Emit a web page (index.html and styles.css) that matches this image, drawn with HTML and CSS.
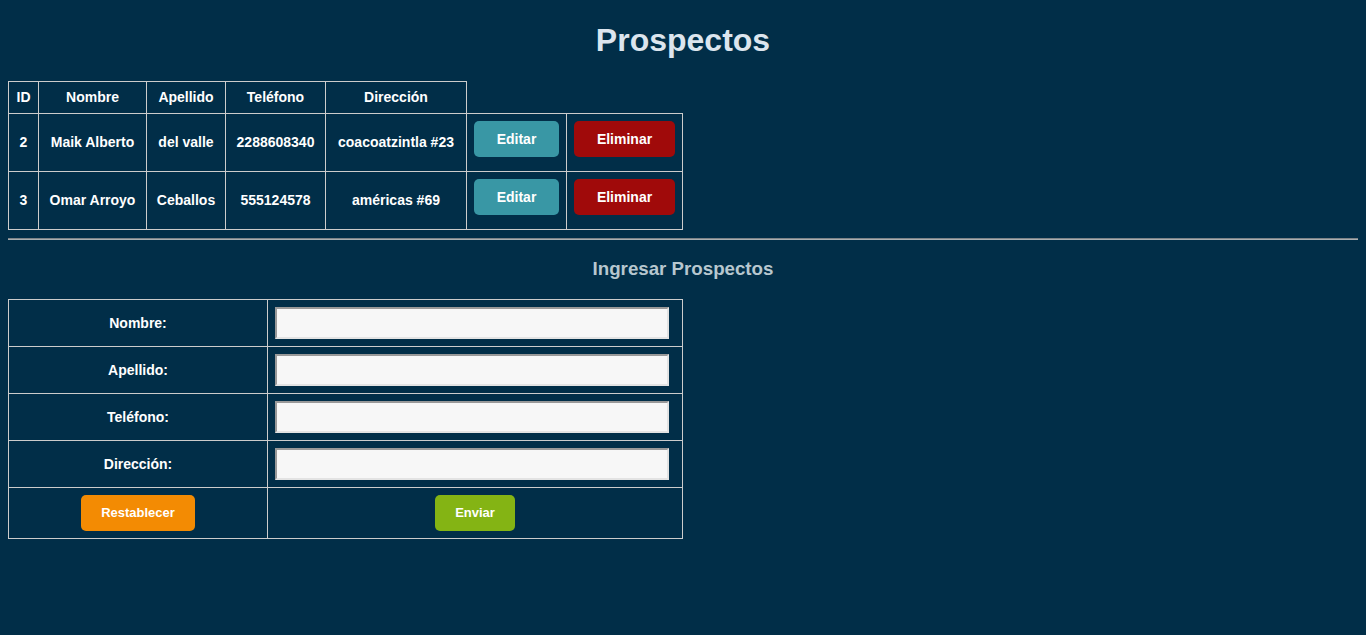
FILE: index.html
```html
<!DOCTYPE html>
<html lang="es">
<head>
<meta charset="utf-8">
<title>Prospectos</title>
<link rel="stylesheet" href="styles.css">
</head>
<body>
<h1 class="title">Prospectos</h1>
<table class="list">
  <colgroup>
    <col class="c-id"><col class="c-nom"><col class="c-ape"><col class="c-tel"><col class="c-dir"><col class="c-ed"><col class="c-el">
  </colgroup>
  <thead>
    <tr><th>ID</th><th>Nombre</th><th>Apellido</th><th>Teléfono</th><th>Dirección</th></tr>
  </thead>
  <tbody>
    <tr>
      <td>2</td><td>Maik Alberto</td><td>del valle</td><td>2288608340</td><td>coacoatzintla #23</td>
      <td class="act"><button class="btn btn-edit">Editar</button></td>
      <td class="act"><button class="btn btn-del">Eliminar</button></td>
    </tr>
    <tr>
      <td>3</td><td>Omar Arroyo</td><td>Ceballos</td><td>555124578</td><td>américas #69</td>
      <td class="act"><button class="btn btn-edit">Editar</button></td>
      <td class="act"><button class="btn btn-del">Eliminar</button></td>
    </tr>
  </tbody>
</table>
<hr class="sep">
<h3 class="subtitle">Ingresar Prospectos</h3>
<form class="form">
<table class="ftable">
  <colgroup><col class="f-lab"><col class="f-in"></colgroup>
  <tr><td class="lab">Nombre:</td><td><input class="inp" type="text"></td></tr>
  <tr><td class="lab">Apellido:</td><td><input class="inp" type="text"></td></tr>
  <tr><td class="lab">Teléfono:</td><td><input class="inp" type="text"></td></tr>
  <tr><td class="lab">Dirección:</td><td><input class="inp" type="text"></td></tr>
  <tr>
    <td class="ctr"><button type="reset" class="fbtn btn-reset">Restablecer</button></td>
    <td class="ctr"><button type="button" class="fbtn btn-send">Enviar</button></td>
  </tr>
</table>
</form>
</body>
</html>
```
FILE: styles.css
```css
html, body {
  background: #012e48;
}
body {
  margin: 8px;
  font-family: "Liberation Sans", Arial, sans-serif;
  color: #ffffff;
}
.title {
  font-size: 32px;
  font-weight: bold;
  text-align: center;
  color: #dce5ee;
  margin: 14px 0 22px;
  line-height: 37px;
}
.list {
  border-collapse: collapse;
  table-layout: fixed;
  width: 675px;
  font-size: 14px;
  font-weight: bold;
}
.c-id { width: 30px; }
.c-nom { width: 108px; }
.c-ape { width: 79px; }
.c-tel { width: 100px; }
.c-dir { width: 141px; }
.c-ed { width: 100px; }
.c-el { width: 116px; }
.list th, .list td {
  border: 1px solid #cccccc;
  padding: 7px 0;
  text-align: center;
  line-height: 17px;
  white-space: nowrap;
}
.list td.act {
  padding: 7px;
}
.btn {
  display: block;
  width: 100%;
  height: 36px;
  margin: 0 0 7px 0;
  border: none;
  border-radius: 5px;
  color: #ffffff;
  font-family: "Liberation Sans", Arial, sans-serif;
  font-size: 14px;
  font-weight: bold;
  padding: 0;
}
.btn-edit { background: #3997a5; }
.btn-del { background: #a00a0a; }
.sep {
  margin: 8px 0;
  border: none;
  border-top: 1px solid #7c8388;
  border-bottom: 1px solid #a9aeb1;
  height: 0;
}
.subtitle {
  font-size: 18.72px;
  font-weight: bold;
  text-align: center;
  color: #b7c7cf;
  margin: 18px 0 19px;
  line-height: 22px;
}
.form { margin: 0; }
.ftable {
  border-collapse: collapse;
  table-layout: fixed;
  width: 675px;
}
.f-lab { width: 259px; }
.f-in { width: 415px; }
.ftable td {
  border: 1px solid #cccccc;
  padding: 7px;
  font-size: 14px;
  font-weight: bold;
}
.ftable td.lab {
  text-align: center;
}
.ftable td.ctr {
  text-align: center;
  line-height: 0;
}
.inp {
  display: block;
  box-sizing: border-box;
  width: 394px;
  height: 32px;
  margin: 0;
  background: #f7f7f7;
  border-style: solid;
  border-width: 2px;
  border-color: #999999 #e3e3e3 #e3e3e3 #999999;
  padding: 2px 4px;
}
.fbtn {
  height: 36px;
  padding: 0 20px;
  border: none;
  border-radius: 5px;
  color: #ffffff;
  font-family: "Liberation Sans", Arial, sans-serif;
  font-size: 13px;
  line-height: 16px;
  font-weight: bold;
  vertical-align: top;
}
.btn-reset { background: #f38b03; }
.btn-send { background: #84b414; }
```
